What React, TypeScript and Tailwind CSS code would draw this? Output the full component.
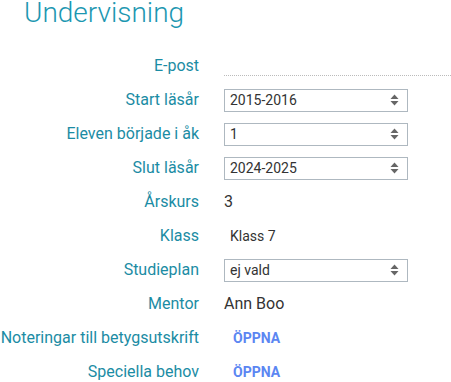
import React from 'react';

const Arrows = () => (
  <svg width="9" height="12" viewBox="0 0 9 12" className="shrink-0">
    <path d="M4.5 0.5 L8.5 5 H0.5 Z" fill="#666" />
    <path d="M4.5 11.5 L8.5 7 H0.5 Z" fill="#666" />
  </svg>
);

const Select: React.FC<{ value: string }> = ({ value }) => (
  <div className="w-[184px] h-[23px] border border-[#aeb8c0] bg-white flex items-center justify-between pl-[5px] pr-[8px] text-[14px] text-[#333]">
    <span>{value}</span>
    <Arrows />
  </div>
);

const Open = () => (
  <span className="pl-[9px] text-[14px] font-bold text-[#5b86f2]">ÖPPNA</span>
);

const rows: { label: string; value: React.ReactNode }[] = [
  { label: 'E-post', value: <div className="w-[227px] mt-[19px] border-b border-dotted border-[#bbb]" /> },
  { label: 'Start läsår', value: <Select value="2015-2016" /> },
  { label: 'Eleven började i åk', value: <Select value="1" /> },
  { label: 'Slut läsår', value: <Select value="2024-2025" /> },
  { label: 'Årskurs', value: <span className="text-[16px] text-[#333]">3</span> },
  { label: 'Klass', value: <span className="pl-[6px] text-[14px] text-[#333]">Klass 7</span> },
  { label: 'Studieplan', value: <Select value="ej vald" /> },
  { label: 'Mentor', value: <span className="text-[16px] text-[#333]">Ann Boo</span> },
  { label: 'Noteringar till betygsutskrift', value: <Open /> },
  { label: 'Speciella behov', value: <Open /> },
];

export default function App() {
  return (
    <div className="w-[451px] h-[382px] overflow-hidden bg-white font-['Roboto',sans-serif]">
      <h1 className="pl-[24px] h-[49px] text-[28px] leading-[26px] font-light text-[#1c97b1]">Undervisning</h1>
      <div className="flex flex-col">
        {rows.map((r) => (
          <div key={r.label} className="h-[34px] flex items-center">
            <div className="w-[199px] text-right text-[16px] text-[#1b8ca4] shrink-0 whitespace-nowrap">{r.label}</div>
            <div className="pl-[25px] flex items-center">{r.value}</div>
          </div>
        ))}
      </div>
    </div>
  );
}
